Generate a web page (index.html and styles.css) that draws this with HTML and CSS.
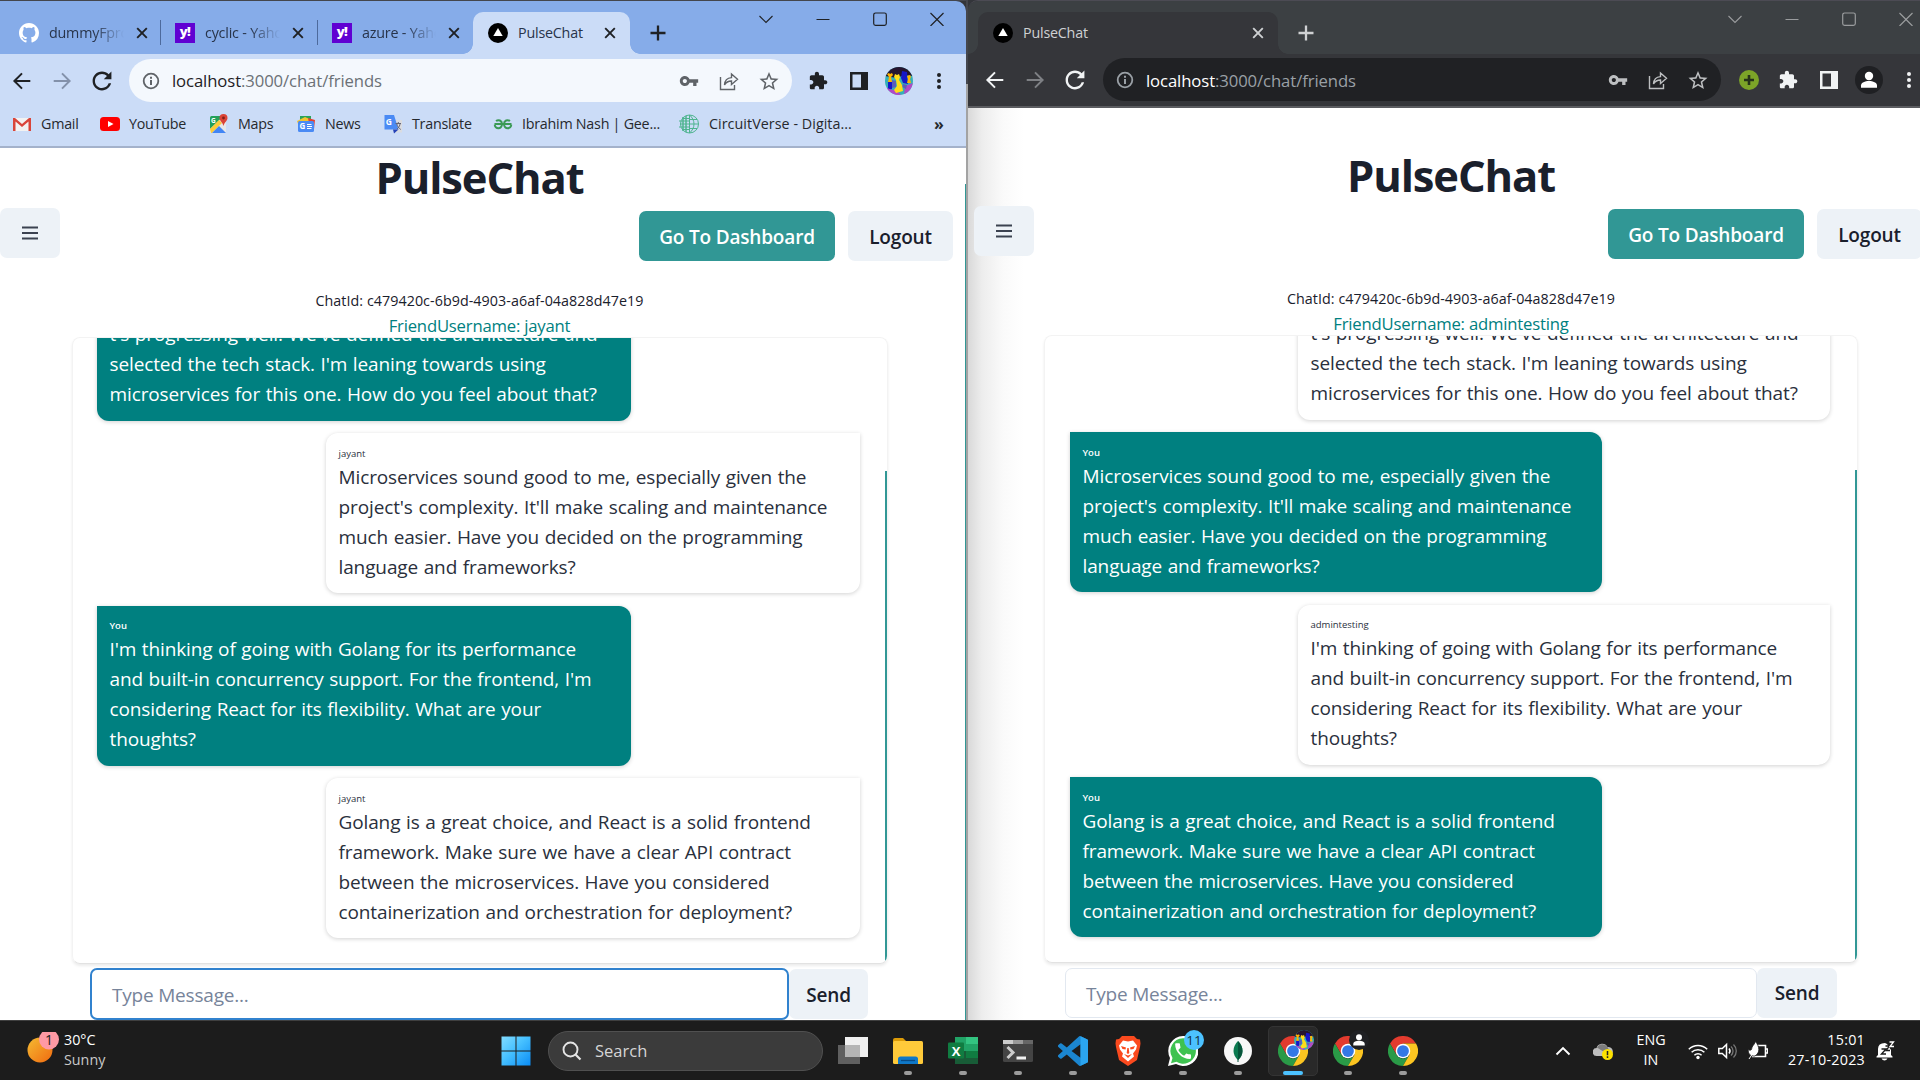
FILE: index.html
```html
<!DOCTYPE html>
<html lang="en">
<head>
<meta charset="utf-8">
<title>PulseChat</title>
<link rel="stylesheet" href="styles.css">
</head>
<body>
<svg class="sprite" aria-hidden="true">
  <symbol id="back" viewBox="0 0 20 20"><path d="M18.3 10H2.6M10 2.4 2.4 10l7.600 7.600" fill="none" stroke="currentColor" stroke-width="2"/></symbol>
  <symbol id="forward" viewBox="0 0 20 20"><path d="M1.700 10h15.700M10 2.400 17.600 10 10 17.600" fill="none" stroke="currentColor" stroke-width="2"/></symbol>
  <symbol id="reload" viewBox="3.500 3.500 17 17"><path fill="currentColor" d="M17.65 6.35C16.2 4.9 14.21 4 12 4c-4.42 0-7.99 3.58-7.99 8s3.57 8 7.99 8c3.73 0 6.84-2.55 7.73-6h-2.08c-.82 2.33-3.04 4-5.65 4-3.31 0-6-2.69-6-6s2.69-6 6-6c1.66 0 3.14.69 4.22 1.78L13.500 10.500h6.500V4l-2.350 2.350z"/></symbol>
  <symbol id="info" viewBox="0 0 20 20"><circle cx="10" cy="10" r="7.300" fill="none" stroke="currentColor" stroke-width="1.800"/><path d="M9 9h2v5H9zM9 5.800h2v2H9z" fill="currentColor"/></symbol>
  <symbol id="key" viewBox="0 0 24 24"><path fill="currentColor" d="M12.65 10C11.83 7.67 9.61 6 7 6c-3.31 0-6 2.69-6 6s2.69 6 6 6c2.61 0 4.83-1.67 5.65-4H17v4h4v-4h2v-4H12.65zM7 14.500c-1.400 0-2.500-1.100-2.500-2.500s1.100-2.500 2.500-2.500 2.500 1.100 2.500 2.500-1.100 2.500-2.500 2.500z"/></symbol>
  <symbol id="share" viewBox="0 0 20 20"><path d="M1.500 6v12.500h14V14M5.500 14c.3-5 3-7.200 7-7.400V3l6 5.300-6 5.200V10c-3.500 0-5.500 1.300-7 4z" fill="none" stroke="currentColor" stroke-width="1.400"/></symbol>
  <symbol id="star" viewBox="1.500 1 21 21"><path fill="currentColor" d="M22 9.24l-7.19-.62L12 2 9.19 8.63 2 9.24l5.46 4.73L5.82 21 12 17.27 18.18 21l-1.63-7.03L22 9.24zM12 15.400l-3.760 2.270 1-4.280-3.320-2.880 4.380-.38L12 6.100l1.710 4.040 4.380.38-3.320 2.880 1 4.280L12 15.400z"/></symbol>
  <symbol id="puzzle" viewBox="1 0 24 24"><path fill="currentColor" d="M20.5 11H19V7c0-1.1-.9-2-2-2h-4V3.5C13 2.12 11.88 1 10.5 1S8 2.12 8 3.5V5H4c-1.1 0-1.99.9-1.99 2v3.8H3.5c1.49 0 2.7 1.21 2.7 2.7s-1.21 2.7-2.7 2.7H2V20c0 1.1.9 2 2 2h3.8v-1.5c0-1.49 1.21-2.7 2.7-2.7 1.49 0 2.7 1.21 2.7 2.7V22H17c1.1 0 2-.9 2-2v-4h1.5c1.38 0 2.5-1.12 2.5-2.5S21.88 11 20.5 11z"/></symbol>
  <symbol id="panel" viewBox="0 0 20 20"><path fill="currentColor" fill-rule="evenodd" d="M1 1h18v18H1zM3.500 3.500v13H12v-13z"/></symbol>
  <symbol id="dots" viewBox="0 0 20 20"><g fill="currentColor"><circle cx="10" cy="4" r="2"/><circle cx="10" cy="10" r="2"/><circle cx="10" cy="16" r="2"/></g></symbol>
  <symbol id="close" viewBox="0 0 16 16"><path d="m3.200 3.200 9.600 9.600m0-9.600-9.600 9.600" stroke="currentColor" stroke-width="1.900"/></symbol>
  <symbol id="plus" viewBox="0 0 20 20"><path d="M10 2.500v15M2.500 10h15" stroke="currentColor" stroke-width="2.300"/></symbol>
  <symbol id="w-down" viewBox="0 0 14 14"><path d="m.5 4 6.500 6.500L13.500 4" fill="none" stroke="currentColor" stroke-width="1.100"/></symbol>
  <symbol id="w-min" viewBox="0 0 14 14"><path d="M.5 7.500h13" stroke="currentColor"/></symbol>
  <symbol id="w-max" viewBox="0 0 14 14"><rect x=".7" y="1" width="12.600" height="12.300" rx="1.800" fill="none" stroke="currentColor" stroke-width="1.200"/></symbol>
  <symbol id="w-close" viewBox="0 0 14 14"><path d="m.5 1 13 13m0-13-13 13" stroke="currentColor" stroke-width="1.200"/></symbol>
  <symbol id="vercel" viewBox="0 0 20 20"><circle cx="10" cy="10" r="10"/><path d="m10 5 4.700 8H5.300z" fill="#fff"/></symbol>
  <symbol id="github" viewBox="0 0 16 16"><path fill="#fff" d="M8 0C3.58 0 0 3.58 0 8c0 3.54 2.29 6.53 5.47 7.59.4.07.55-.17.55-.38 0-.19-.01-.82-.01-1.49-2.01.37-2.53-.49-2.69-.94-.09-.23-.48-.94-.82-1.13-.28-.15-.68-.52-.01-.53.63-.01 1.08.58 1.23.82.72 1.21 1.87.87 2.33.66.07-.52.28-.87.51-1.07-1.78-.2-3.64-.89-3.64-3.95 0-.87.31-1.59.82-2.15-.08-.2-.36-1.02.08-2.12 0 0 .67-.21 2.2.82.64-.18 1.32-.27 2-.27.68 0 1.36.09 2 .27 1.53-1.04 2.2-.82 2.2-.82.44 1.1.16 1.92.08 2.12.51.56.82 1.27.82 2.15 0 3.07-1.87 3.75-3.65 3.95.29.25.54.73.54 1.48 0 1.07-.01 1.93-.01 2.2 0 .21.15.46.55.38A8.013 8.013 0 0016 8c0-4.42-3.58-8-8-8z"/></symbol>
  <symbol id="person" viewBox="0 0 28 28"><circle cx="14" cy="14" r="14" fill="#1f2023"/><circle cx="14" cy="10" r="4.200" fill="#fff"/><path d="M6 21.800v-2.300c0-6 16-6 16 0v2.300z" fill="#fff"/></symbol>
  <symbol id="avatar" viewBox="0 0 28 28"><clipPath id="round"><circle cx="14" cy="14" r="14"/></clipPath><g clip-path="url(#round)"><path fill="#35b0b8" d="M0 0h28v28H0z"/><path fill="#251530" d="M0 0h28v9l-9-1-7 3-12-2z"/><path fill="#1616c8" d="m17 4 5 1 1 12-5-1-2-5zM3 15h4v7l-4 1z"/><path fill="#b14ac4" d="M0 20l7 3 4-1 5 6H5zM20 19l8-3-2 9-7 3z"/><path fill="#5a5fb8" d="M7 13l4 1v6l-4 1zM18 17l4 1-1 4-4-2z"/><path fill="#ffb400" d="M2 7l2-1 1 1 2-1 1 2-2 2 1 5H3l1-5zM22 9l3-1 1 2-1 2 1 4h-4l1-4z"/><path fill="#ffdc18" d="m10 7 2 1 2-1 1 3-1 3 3 5 1 6-7 2-2-3 3-4-1-6-2-3z"/></g></symbol>
  <symbol id="chrome" viewBox="0 0 24 24"><path fill="#e33b2e" d="M1.600 6A12 12 0 0 1 22.400 6H12L6.800 15z"/><path fill="#2a9a47" d="M1.600 6l5.200 9a6 6 0 0 0 10.400 0L12 24A12 12 0 0 1 1.600 6z"/><path fill="#fcc521" d="M22.400 6A12 12 0 0 1 12 24l5.200-9L12 6z"/><circle cx="12" cy="12" r="5.800" fill="#fff"/><circle cx="12" cy="12" r="4.700" fill="#3478e5"/></symbol>
  <symbol id="menu" viewBox="0 0 20 20"><path d="M2 4.500h16M2 10h16M2 15.500h16" stroke="currentColor" stroke-width="1.900"/></symbol>
</svg>

<main class="desktop">
  <section class="window light">
    <header class="tabstrip">
      <div class="tab first"><svg class="i20"><use href="#github"/></svg><span class="label fade">dummyFproject</span><svg class="i16"><use href="#close"/></svg></div>
      <div class="tab mid"><span class="yahoo">y!</span><span class="label fade">cyclic - Yahoo</span><svg class="i16"><use href="#close"/></svg></div>
      <div class="tab last"><span class="yahoo">y!</span><span class="label fade">azure - Yahoo</span><svg class="i16"><use href="#close"/></svg></div>
      <div class="tab active"><svg class="i20"><use href="#vercel"/></svg><span class="label">PulseChat</span><svg class="i16"><use href="#close"/></svg></div>
      <svg class="i20 newtab"><use href="#plus"/></svg>
      <div class="controls"><svg class="i14"><use href="#w-down"/></svg><svg class="i14"><use href="#w-min"/></svg><svg class="i14"><use href="#w-max"/></svg><svg class="i14"><use href="#w-close"/></svg></div>
    </header>
    <nav class="toolbar">
      <svg class="i20"><use href="#back"/></svg><svg class="i20 dim"><use href="#forward"/></svg><svg class="i20"><use href="#reload"/></svg>
      <div class="omnibox"><svg class="i20"><use href="#info"/></svg><p class="url"><b>localhost</b>:3000/chat/friends</p><svg class="i20"><use href="#key"/></svg><svg class="i20"><use href="#share"/></svg><svg class="i20"><use href="#star"/></svg></div>
      <svg class="i20"><use href="#puzzle"/></svg><svg class="i20"><use href="#panel"/></svg><svg class="i28"><use href="#avatar"/></svg><svg class="i20"><use href="#dots"/></svg>
    </nav>
    <nav class="bookmarks">
      <div><svg class="i20" viewBox="0 0 20 20"><path fill="#f2f2f2" d="M1 4h18v13H1z"/><path fill="#d9453a" d="M1 4h2l7 6 7-6h2v13h-2.500V7.500L10 13 3.500 7.500V17H1z"/></svg><span>Gmail</span></div>
      <div><svg class="i20" viewBox="0 0 20 20"><rect y="3" width="20" height="14" rx="3.500" fill="#f00"/><path d="m8 7 5.500 3L8 13z" fill="#fff"/></svg><span>YouTube</span></div>
      <div><svg class="i20" viewBox="0 0 20 20"><rect x="1" y="2" width="16" height="17" rx="1.500" fill="#e8e8e8"/><path fill="#23a05a" d="M1 3.500Q1 2 2.500 2h12L1 15z"/><path fill="#fccb3a" d="m1 15 9-9 3 3-10 10H2z"/><path fill="#4285f4" d="m3 19 7-7 7 7z"/><text x="2" y="8.500" font-size="6.500" fill="#fff" font-weight="700">G</text><path fill="#db4437" d="M14.500 0a4 4 0 0 1 4 4c0 3-3.200 4-4 8-.8-4-4-5-4-8a4 4 0 0 1 4-4z"/><circle cx="14.500" cy="4" r="1.400" fill="#811f18"/></svg><span>Maps</span></div>
      <div><svg class="i20" viewBox="0 0 20 20"><path fill="#2aa45a" d="M4 2h11v7H4z"/><path fill="#f4c430" d="m1 7 8-4 9 4-1 6H3z"/><path fill="#e34133" d="m12 4 7 2-1 9h-4z"/><rect x="2" y="7" width="16" height="11" rx="1.500" fill="#4a8af4"/><text x="3.500" y="15.200" font-size="8" fill="#fff" font-weight="700">G</text><path d="M11 10.500h4.500M11 12.500h5M11 14.500h4.500" stroke="#fff"/></svg><span>News</span></div>
      <div><svg class="i20" viewBox="0 0 20 20"><path fill="#dadce0" d="M8 6h11v12.500H11z"/><path fill="#4a8af4" d="M1.500 1h9.500l4.500 14.500h-14z"/><path fill="#2442b8" d="M10 15.500h5.500L11 19.500z"/><text x="2.800" y="10.800" font-size="8.500" fill="#fff" font-weight="700">G</text><path d="M12.500 9.500H18M15.300 8v1.500m-1.500 0c.5 3 2 4.500 4 6m-.7-6c-.3 2-1 4-3 5.500" fill="none" stroke="#667" stroke-width="1"/></svg><span>Translate</span></div>
      <div><svg class="i20" viewBox="0 0 20 20"><path d="M1.500 10h17M9 10c0 6-7.500 5-7.200.8M11 10c0 6 7.500 5 7.200.8M9 10c0-3.500-3.500-4.800-6-3M11 10c0-3.500 3.500-4.800 6-3" fill="none" stroke="#3b9a55" stroke-width="2"/></svg><span>Ibrahim Nash | Gee...</span></div>
      <div class="wide"><svg class="i20" viewBox="0 0 20 20"><g fill="none" stroke="#4eb48f"><circle cx="10.500" cy="10" r="9"/><path d="M10.500 1v18M10.500 1c6 5 6 13 0 18M10.500 10h9M11 5.500h7M11 14.500h7M0 7h10M1 10h9M0 13h10M3 4.500h7M3 15.500h7" /><path d="M4 3v14M7 2v16" stroke-width="1.500"/></g></svg><span>CircuitVerse - Digita...</span></div>
      <b class="more">»</b>
    </nav>
    <div class="page">
      <h1>PulseChat</h1>
      <div class="actions"><button class="btn icon"><svg class="i20"><use href="#menu"/></svg></button><button class="btn primary">Go To Dashboard</button><button class="btn">Logout</button></div>
      <p class="chat-id">ChatId: c479420c-6b9d-4903-a6af-04a828d47e19</p>
      <p class="friend">FriendUsername: jayant</p>
      <div class="chat">
        <article class="msg mine"><small>You</small>t's progressing well. We've defined the architecture and<br>selected the tech stack. I'm leaning towards using<br>microservices for this one. How do you feel about that?</article>
        <article class="msg theirs"><small>jayant</small>Microservices sound good to me, especially given the<br>project's complexity. It'll make scaling and maintenance<br>much easier. Have you decided on the programming<br>language and frameworks?</article>
        <article class="msg mine"><small>You</small>I'm thinking of going with Golang for its performance<br>and built-in concurrency support. For the frontend, I'm<br>considering React for its flexibility. What are your<br>thoughts?</article>
        <article class="msg theirs"><small>jayant</small>Golang is a great choice, and React is a solid frontend<br>framework. Make sure we have a clear API contract<br>between the microservices. Have you considered<br>containerization and orchestration for deployment?</article>
        <i class="thumb"></i>
      </div>
      <form class="composer"><div class="field focus">Type Message...</div><div class="btn">Send</div></form>
    </div>
    <i class="page-thumb"></i>
  </section>

  <section class="window dark">
    <header class="tabstrip">
      <div class="tab active"><svg class="i20"><use href="#vercel"/></svg><span class="label">PulseChat</span><svg class="i16"><use href="#close"/></svg></div>
      <svg class="i20 newtab"><use href="#plus"/></svg>
      <div class="controls"><svg class="i14"><use href="#w-down"/></svg><svg class="i14"><use href="#w-min"/></svg><svg class="i14"><use href="#w-max"/></svg><svg class="i14"><use href="#w-close"/></svg></div>
    </header>
    <nav class="toolbar">
      <svg class="i20"><use href="#back"/></svg><svg class="i20 dim"><use href="#forward"/></svg><svg class="i20"><use href="#reload"/></svg>
      <div class="omnibox"><svg class="i20"><use href="#info"/></svg><p class="url"><b>localhost</b>:3000/chat/friends</p><svg class="i20"><use href="#key"/></svg><svg class="i20"><use href="#share"/></svg><svg class="i20"><use href="#star"/></svg></div>
      <svg class="i20" viewBox="0 0 20 20"><circle cx="10" cy="10" r="10" fill="#7ca428"/><path d="M10 5v10M5 10h10" stroke="#26331a" stroke-width="2.600"/></svg><svg class="i20"><use href="#puzzle"/></svg><svg class="i20"><use href="#panel"/></svg><svg class="i28"><use href="#person"/></svg><svg class="i20"><use href="#dots"/></svg>
    </nav>
    <div class="page">
      <h1>PulseChat</h1>
      <div class="actions"><button class="btn icon"><svg class="i20"><use href="#menu"/></svg></button><button class="btn primary">Go To Dashboard</button><button class="btn">Logout</button></div>
      <p class="chat-id">ChatId: c479420c-6b9d-4903-a6af-04a828d47e19</p>
      <p class="friend">FriendUsername: admintesting</p>
      <div class="chat">
        <article class="msg theirs"><small>admintesting</small>t's progressing well. We've defined the architecture and<br>selected the tech stack. I'm leaning towards using<br>microservices for this one. How do you feel about that?</article>
        <article class="msg mine"><small>You</small>Microservices sound good to me, especially given the<br>project's complexity. It'll make scaling and maintenance<br>much easier. Have you decided on the programming<br>language and frameworks?</article>
        <article class="msg theirs"><small>admintesting</small>I'm thinking of going with Golang for its performance<br>and built-in concurrency support. For the frontend, I'm<br>considering React for its flexibility. What are your<br>thoughts?</article>
        <article class="msg mine"><small>You</small>Golang is a great choice, and React is a solid frontend<br>framework. Make sure we have a clear API contract<br>between the microservices. Have you considered<br>containerization and orchestration for deployment?</article>
        <i class="thumb"></i>
      </div>
      <form class="composer"><div class="field">Type Message...</div><div class="btn">Send</div></form>
    </div>
  </section>
</main>

<footer class="taskbar">
  <div class="weather">
    <svg width="36" height="36" viewBox="0 0 36 36"><defs><linearGradient id="sun" x2="1" y2="1"><stop stop-color="#f5bb32"/><stop offset="1" stop-color="#f06a10"/></linearGradient></defs><circle cx="13" cy="18" r="12.500" fill="url(#sun)"/><circle cx="22" cy="7.500" r="10" fill="#ff99a4"/><text x="22" y="12.500" font-size="14" text-anchor="middle" fill="#1c1c1c">1</text></svg>
    <p>30°C<br><span>Sunny</span></p>
  </div>
  <svg class="start" viewBox="0 0 30 30"><defs><linearGradient id="win" x2="1" y2="1"><stop stop-color="#82dcff"/><stop offset=".45" stop-color="#46c0ff"/><stop offset="1" stop-color="#0a8cf5"/></linearGradient></defs><path fill="url(#win)" d="M.5.500h14v14H.5zM15.500.500h14v14h-14zM.5 15.500h14v14H.5zM15.500 15.500h14v14h-14z"/></svg>
  <div class="search"><svg class="i20" viewBox="0 0 20 20"><circle cx="8.500" cy="8.500" r="7" fill="none" stroke="#e4e4e4" stroke-width="1.900"/><path d="m13.500 13.500 5 5" stroke="#e4e4e4" stroke-width="2.200"/></svg>Search</div>
  <div class="apps">
    <div class="app"><svg class="i30" viewBox="0 0 30 30"><path fill="#5f5f5f" d="M0 9h22v19H0z"/><path fill="#f0f0f0" d="M7 1h23v20H7z"/><path fill="#b5b5b5" d="M7 9h15v12H7z"/></svg></div>
    <div class="app run"><svg class="i30" viewBox="0 0 30 30"><path fill="#dc9b08" d="M0 4q0-2 2-2h8l3 3v6H0z"/><rect y="5" width="30" height="23" rx="1.500" fill="#ffca3a"/><path fill="#0f78c8" d="M5 28v-5q0-2.500 2.500-2.500h15Q25 20.500 25 23v5z"/><path d="M8 24.500h14" stroke="#074b87" stroke-width="1.300"/></svg></div>
    <div class="app run"><svg class="i30" viewBox="0 0 30 30"><path fill="#21a366" d="M7 1h23v14H7z"/><path fill="#33c481" d="M18 1h12v7H18z"/><path fill="#107c41" d="M7 15h23v7H7z"/><path fill="#185c37" d="M7 15h11v13H7zM18 22h12v6H18z"/><rect y="6.500" width="16" height="16" rx="1" fill="#107c41"/><text x="8" y="19.500" font-size="13" font-weight="700" text-anchor="middle" fill="#fff">X</text></svg></div>
    <div class="app run"><svg class="i30" viewBox="0 0 30 30"><rect y="4" width="30" height="22" rx="1.500" fill="#444"/><path fill="#ccc" d="M0 4h10v4H0z"/><path fill="#999" d="M10 4h10v4H10z"/><path fill="#666" d="M20 4h10v4H20z"/><path d="m4.500 11 5.500 5.500-5.500 5.500" fill="none" stroke="#ccc" stroke-width="3"/><path d="M13.500 22h9.500" stroke="#f2f2f2" stroke-width="3"/></svg></div>
    <div class="app run"><svg class="i30" viewBox="0 0 24 24"><path fill="#1b86d0" d="M23.15 2.587L18.21.21a1.494 1.494 0 0 0-1.705.29l-9.46 8.63-4.12-3.128a.999.999 0 0 0-1.276.057L.327 7.261A1 1 0 0 0 .326 8.74L3.899 12 .326 15.26a1 1 0 0 0 .001 1.479L1.65 17.94a.999.999 0 0 0 1.276.057l4.12-3.128 9.46 8.63a1.492 1.492 0 0 0 1.704.29l4.942-2.377A1.5 1.5 0 0 0 24 20.06V3.939a1.5 1.5 0 0 0-.85-1.352zm-5.146 14.861L10.826 12l7.178-5.448v10.896z"/><path fill="#2ba5f0" d="M18 .2 24 3v18l-6 2.800z"/></svg></div>
    <div class="app run"><svg class="i30" viewBox="0 0 30 30"><path fill="#fb4a1e" d="M9 0h12l3 3 3 .5.500 4-.5 3.500-3 13-9 6-9-6-3-13-.5-3.500.5-4L6 3z"/><path fill="#fff" d="m10 4.500 5 1 5-1 4 5-1 4-3 4 1 3-6 5-6-5 1-3-3-4-1-4z"/><path fill="#fb4a1e" d="m8 10 5 1.500-.5 2-3-.5zm14 0-5 1.500.5 2 3-.5zM11 18l4 1.500 4-1.500-4 4zM14.300 12h1.400l.6 5-1.300 1-1.300-1z"/></svg></div>
    <div class="app run"><svg class="i30" viewBox="0 0 30 30"><path fill="#fff" d="M15 0a15 15 0 1 1-7 28L0 30l2-8A15 15 0 0 1 15 0z"/><path fill="#3ec250" d="M15 2.300a12.700 12.700 0 1 1-6.500 23.500L3 27.200l1.500-5.300A12.700 12.700 0 0 1 15 2.300z"/><path transform="translate(4.500 4.500) scale(.88)" fill="#fff" d="M6.620 10.790c1.440 2.830 3.760 5.140 6.590 6.590l2.200-2.200c.27-.27.67-.36 1.020-.24 1.120.37 2.330.57 3.570.57.550 0 1 .45 1 1V20c0 .55-.45 1-1 1-9.390 0-17-7.610-17-17 0-.55.450-1 1-1h3.500c.550 0 1 .45 1 1 0 1.250.2 2.450.57 3.570.11.350.03.740-.25 1.020l-2.200 2.200z"/></svg><span class="count">11</span></div>
    <div class="app run"><svg class="i30" viewBox="0 0 30 30"><circle cx="15" cy="15" r="14" fill="#f7f7f7"/><path fill="#0b7a50" d="M15 5c6 6 6 14 0 19-6-5-6-13 0-19z"/><path fill="#06543a" d="M15 5c6 6 6 14 0 19z"/><path d="M15 22v4" stroke="#06543a"/></svg></div>
    <div class="app run current"><svg class="i30"><use href="#chrome"/></svg><svg class="mini"><use href="#avatar"/></svg></div>
    <div class="app run"><svg class="i30"><use href="#chrome"/></svg><svg class="mini"><use href="#person"/></svg></div>
    <div class="app run"><svg class="i30"><use href="#chrome"/></svg></div>
  </div>
  <div class="tray">
    <svg class="i20" viewBox="0 0 20 20"><path d="m3.500 13.500 6.500-6.500 6.500 6.500" fill="none" stroke="#fff" stroke-width="1.900"/></svg>
    <svg class="i20 cloud" viewBox="0 0 20 20"><path fill="#bdbdbd" d="M4 15a4 4 0 0 1-.5-8A6 6 0 0 1 14.500 6a4.500 4.500 0 0 1 1.500 9z"/><path fill="#7d7d7d" d="M4 6.500A6 6 0 0 1 14.500 6l2 4-4 2z"/><circle cx="14.500" cy="13.500" r="5.500" fill="#fce100"/><path d="M14.500 10v4.300m0 1v1.700" stroke="#222" stroke-width="1.500"/></svg>
    <p class="lang">ENG<br>IN</p>
    <svg class="i20" viewBox="0 0 20 20"><g fill="none" stroke="#fff" stroke-width="1.500"><path d="M.8 8.300a13 13 0 0 1 18.400 0M3.600 11.300a9 9 0 0 1 12.800 0M6.400 14.200a5 5 0 0 1 7.200 0"/></g><circle cx="10" cy="16.500" r="1.700" fill="#fff"/></svg>
    <svg class="i20" viewBox="0 0 20 20"><path d="M.8 7.500v5h3.500l4.200 4v-13l-4.200 4z" fill="none" stroke="#fff" stroke-width="1.500"/><path d="M11 7.500a4 4 0 0 1 0 5" fill="none" stroke="#fff" stroke-width="1.500"/><path d="M13 5.500a6 6 0 0 1 0 9M15.500 3.500a9 9 0 0 1 0 13" fill="none" stroke="#777" stroke-width="1.300"/></svg>
    <svg class="i20" viewBox="0 0 20 20"><path d="M9 4.500h8.500v11H4M18 8h1.700v4H18" fill="none" stroke="#fff" stroke-width="1.600"/><path fill="#fff" stroke="#1c1c1c" stroke-width=".8" d="M7.500.5c4 5 5 11-.5 14.500C2 15.500-.5 12 .5 8.500c1 1 2 1 3 0 .5-4 2.500-4 4-8z"/><path d="m1 18 6-9" stroke="#fff"/></svg>
    <p class="clock">15:01<br>27-10-2023</p>
    <svg class="i20 bell" viewBox="0 0 20 20"><path fill="#fff" d="M3 14V8q0-6 7-6l2 1 4 6v5l1.500 1.500v1H1.500v-1zM6.500 17.500h6q-1 2-3 2t-3-2z"/><path d="M6.500 8h4.500l-4.500 5H11" fill="none" stroke="#1c1c1c" stroke-width="1.400"/><path d="M10.500 5h4l-3.500 4.500h4" fill="none" stroke="#1c1c1c" stroke-width="1.300"/><path d="M14.500 1h4l-3.500 4.500h4" fill="none" stroke="#fff" stroke-width="1.300"/></svg>
  </div>
</footer>
</body>
</html>
```
FILE: styles.css
```css
* { box-sizing: border-box; margin: 0; }

body {
  width: 1920px;
  height: 1080px;
  overflow: hidden;
  display: grid;
  grid-template-rows: 1020px 60px;
  background: #fff;
  color: #1a202c;
  font-family: "Open Sans", "Noto Sans", sans-serif;
}

p, h1, span, .btn, .field, .msg { white-space: nowrap; }

.sprite { position: absolute; width: 0; height: 0; }
.i14 { width: 14px; height: 14px; }
.i16 { width: 16px; height: 16px; }
.i20 { width: 20px; height: 20px; }
.i28 { width: 28px; height: 28px; margin: 0 -4px; }
.i30 { width: 30px; height: 30px; }
svg { flex: none; display: block; }

/* browser windows */
.desktop { display: flex; height: 1020px; overflow: hidden; background: #33353a; }
.window { position: relative; display: flex; flex-direction: column; height: 1020px; overflow: hidden; border-top: 1px solid #4c4b54; }
.light {
  --strip: #86ace9; --bar: #cbdcf7; --box: #f4f8fd; --ink: #1f2124;
  --soft: #5f6368; --dim: #8391aa; --line: #a4b2cb; --tab-ink: #28344a;
  width: 968px;
  border-right: 2px solid;
  border-image: linear-gradient(#44464d 84px, #a3a3a3 84px) 1;
}
.dark {
  --strip: #3c4043; --bar: #35363a; --box: #202124; --ink: #f1f3f4;
  --soft: #9aa0a6; --dim: #7e8084; --line: #5b5c60; --tab-ink: #cfd1d3;
  width: 952px;
  border-top-left-radius: 10px;
}

.tabstrip { display: flex; align-items: flex-end; height: 53px; flex: none; background: var(--strip); color: var(--ink); }
.light .tabstrip { border-top-right-radius: 10px; }
.tab { position: relative; display: flex; align-items: center; gap: 10px; height: 42px; padding: 0 12px 0 14px; width: 155px; }
.tab .label { flex: 1; overflow: hidden; padding-bottom: 1px; font-size: 14.3px; color: var(--tab-ink); letter-spacing: -.2px; }
.tab.first { width: 161px; padding: 0 11px 0 19px; }
.tab.mid { width: 157px; }
.tab.first::after, .tab.mid::after { content: ""; position: absolute; right: 0; top: 8px; width: 1px; height: 25px; background: #4d6a9c; }
.tab.last { padding-right: 11px; }
.fade { -webkit-mask-image: linear-gradient(90deg, #000 60%, transparent 100%); mask-image: linear-gradient(90deg, #000 60%, transparent 100%); }
.tab.active { width: 157px; padding: 0 12px 0 15px; background: var(--bar); border-radius: 10px 10px 0 0; }
.tab.active::before, .tab.active::after { content: ""; position: absolute; bottom: 0; width: 10px; height: 10px; }
.tab.active::before { left: -10px; background: radial-gradient(circle at 0 0, transparent 9.5px, var(--bar) 10px); }
.tab.active::after { right: -10px; background: radial-gradient(circle at 100% 0, transparent 9.5px, var(--bar) 10px); }
.dark .tab.active { width: 300px; margin-left: 10px; }
.yahoo { width: 20px; height: 20px; flex: none; background: #6001d2; color: #fff; font-size: 13px; font-weight: 800; line-height: 17px; text-align: center; letter-spacing: -.5px; }
.newtab { margin: 0 0 11px 18px; }
.controls { display: flex; gap: 43px; margin: 0 22px 0 auto; align-self: flex-start; padding-top: 11px; }
.dark .controls { margin-right: 7px; color: #9a9c9e; }
.dark .tab .i16, .dark .newtab { color: #cfd1d3; }

.toolbar { display: flex; align-items: center; gap: 20px; height: 53px; flex: none; padding: 0 11px 0 12px; background: var(--bar); color: var(--ink); }
.dark .toolbar { height: 54px; padding: 0 2px 1px 17px; border-bottom: 2px solid var(--line); }
.dim { color: var(--dim); }
.omnibox { display: flex; align-items: center; gap: 20px; width: 663px; height: 43px; margin: 0 -3px; padding: 0 13px 0 12px; border-radius: 22px; background: var(--box); color: var(--soft); flex: none; }
.dark .omnibox { width: 618px; margin: 0 -2px; }
.dark .omnibox svg { color: #bdbfc1; }
.dark .omnibox svg:first-child { color: #9aa0a6; }
.url { flex: 1; margin-left: -9px; padding-top: 0; font-size: 16.7px; letter-spacing: -.1px; color: #6b7076; }
.url b { font-weight: 400; color: var(--ink); }
.dark .url { padding-top: 1px; color: #9aa0a6; }
.dark .url b { color: #fff; }

.bookmarks { display: grid; grid-template-columns: 88px 109px 87px 87px 110px 186px 254px auto; align-items: center; height: 41px; flex: none; padding: 0 0 6px 12px; background: var(--bar); border-bottom: 2px solid var(--line); font-size: 14.3px; letter-spacing: -.25px; color: #26292e; }
.bookmarks div { display: flex; align-items: center; gap: 9px; }
.bookmarks span { padding-bottom: 1px; }
.bookmarks .wide { gap: 10px; letter-spacing: .05px; }
.more { font-size: 16px; padding-left: 1px; }

/* chat page */
.page { position: relative; flex: 1; overflow: hidden; display: flex; flex-direction: column; background: #fff; }
.light .page { --chat-x: 72px; --chat-w: 816px; --in-x: 90px; --in-w: 699px; --send-w: 79px; --mid: 959px; --row: 953px; padding-top: 2px; }
.dark .page { --chat-x: 70px; --chat-w: 814px; --in-x: 91px; --in-w: 692px; --send-w: 80px; --mid: 954px; --row: 948px; padding: 40px 0 0 6px; background: linear-gradient(90deg, #d9d9d9 0, #ededed 14px, #fafafa 35px, #fff 56px); }
.page h1 { width: var(--mid); height: 56px; line-height: 56px; text-align: center; font-size: 43.5px; font-weight: 700; letter-spacing: -1.1px; }
.actions { display: flex; align-items: flex-start; gap: 13px; width: var(--row); padding-top: 2px; height: 77px; }
.btn { display: flex; align-items: center; justify-content: center; height: 50px; margin-top: 3px; padding: 2px 0 0; width: 105px; border: 0; border-radius: 7px; background: #edf2f7; color: #1a202c; font: 600 19px "Open Sans", sans-serif; letter-spacing: -.18px; flex: none; }
.btn.icon { width: 60px; margin: 0 auto 0 0; padding: 0; color: #3b4250; }
.btn.primary { width: 196px; background: #319795; color: #fff; }
.chat-id, .friend { width: var(--mid); text-align: center; }
.chat-id { height: 33px; line-height: 35px; font-size: 14.3px; letter-spacing: .05px; }
.light .chat-id { height: 34px; line-height: 37px; }
.friend { height: 21px; line-height: 20px; font-size: 16.7px; letter-spacing: -.2px; color: #008080; }
.chat { position: relative; flex: none; display: flex; flex-direction: column; justify-content: flex-end; gap: 12.500px; width: var(--chat-w); height: 627px; margin-left: var(--chat-x); padding: 0 27px 25px 24px; overflow: hidden; border: 1px solid #f3f3f3; border-bottom: 1px solid #e2e2e2; border-radius: 8px; box-shadow: 0 2px 3px rgba(0, 0, 0, .08); }
.dark .chat { height: 628px; padding-left: 25px; }
.msg { flex: none; width: 534px; padding: 12.500px 12.500px 11.500px; font-size: 19px; line-height: 30px; letter-spacing: -.12px; word-spacing: .8px; box-shadow: 0 1px 4px rgba(0, 0, 0, .18); background: #fff; color: #2a303c; }
.dark .msg { width: 532px; }
.msg small { display: block; height: 16px; font-size: 9.500px; line-height: 15px; letter-spacing: 0; }
.mine { border-radius: 0 12px 12px 12px; }
.msg.mine { background: #008080; color: #fff; }
.mine small { font-weight: 600; }
.theirs { align-self: flex-end; border-radius: 12px 0 12px 12px; }
.thumb { position: absolute; right: 0; bottom: -1px; width: 2px; height: 493px; background: #319795; }
.page-thumb { position: absolute; right: 0; top: 183px; width: 1px; height: 837px; background: #319795; }
.composer { display: flex; margin: 5px 0 0 var(--in-x); flex: none; }
.light .composer { margin-top: 4px; }
.field { width: var(--in-w); height: 50px; padding: 0 20px; border: 1px solid #e2e8f0; border-radius: 7px; font-size: 19px; line-height: 51px; letter-spacing: -.2px; color: #77849a; background: #fff; }
.field.focus { height: 52px; border: 2px solid #3182ce; }
.composer .btn { width: var(--send-w); margin-top: 1px; }
.dark .composer .btn { margin-top: 0; padding: 0; }

/* taskbar */
.taskbar { display: flex; align-items: center; background: #1c1c1c; border-top: 1px solid #3f3f3f; color: #fff; font-size: 14.300px; line-height: 20px; }
.weather { display: flex; gap: 1px; align-items: center; width: 501px; padding: 0 0 2px 27px; }
.weather span { color: #c9c9c9; }
.start { width: 30px; height: 30px; }
.search { display: flex; align-items: center; gap: 13px; width: 275px; height: 40px; margin-left: 17px; padding-left: 13px; border: 1px solid #505050; border-radius: 20px; background: #3b3b3b; color: #d5d5d5; font-size: 16.500px; }
.apps { display: flex; gap: 5px; margin-left: 5px; }
.app { position: relative; display: grid; place-items: center; width: 50px; height: 50px; border-radius: 5px; border: 1px solid transparent; }
.run::after { content: ""; position: absolute; left: 20px; bottom: 0; width: 8px; height: 4px; border-radius: 2px; background: #9b9b9b; }
.current { background: #292929; border-color: #343434; }
.current::after { left: 14px; width: 20px; background: #4cc2ff; }
.count { position: absolute; right: 3px; top: 3px; width: 20px; height: 20px; border-radius: 50%; background: #4cc2ff; color: #12303f; font-size: 13.500px; text-align: center; }
.mini { position: absolute; right: 3px; top: 3px; width: 20px; height: 20px; }
.tray { display: flex; align-items: center; margin-left: auto; padding-right: 25px; gap: 10px; }
.tray p { padding-bottom: 2px; }
.tray .cloud { margin-left: 10px; }
.lang { width: 40px; margin: 0 7px 0 8px; text-align: center; }
.clock { width: 87px; text-align: right; letter-spacing: .25px; }
```
